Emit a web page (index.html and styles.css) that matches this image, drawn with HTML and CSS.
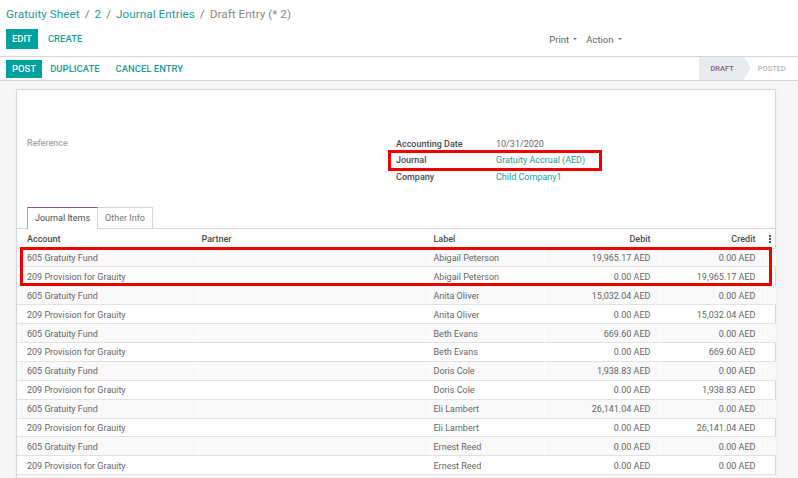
FILE: index.html
```html
<!DOCTYPE html>
<html>
<head>
<meta charset="utf-8">
<link rel="stylesheet" href="styles.css">
</head>
<body>
<div class="cp">
  <div class="crumbs">
    <a class="lnk">Gratuity Sheet</a><span class="sep">/</span><a class="lnk">2</a><span class="sep">/</span><a class="lnk">Journal Entries</a><span class="sep">/</span><span class="cur">Draft Entry (* 2)</span>
  </div>
  <div class="cp-row">
    <div class="btns">
      <span class="btn primary">EDIT</span>
      <span class="btn">CREATE</span>
    </div>
    <div class="dds">
      <span class="dd">Print <i class="caret"></i></span>
      <span class="dd">Action <i class="caret"></i></span>
    </div>
  </div>
</div>
<div class="sbar">
  <div class="btns">
    <span class="btn primary sm">POST</span>
    <span class="btn sm">DUPLICATE</span>
    <span class="btn sm">CANCEL ENTRY</span>
  </div>
  <div class="states">
    <span class="st active">DRAFT</span>
    <span class="st">POSTED</span>
  </div>
</div>
<div class="content">
  <div class="sheet">
    <div class="fields">
      <div class="col-left">
        <div class="lbl muted">Reference</div>
      </div>
      <div class="col-right">
        <div class="frow"><span class="flbl">Accounting Date</span><span class="fval">10/31/2020</span></div>
        <div class="frow mark"><span class="flbl">Journal</span><span class="fval link">Gratuity Accrual (AED)</span></div>
        <div class="frow"><span class="flbl">Company</span><span class="fval link">Child Company1</span></div>
      </div>
    </div>
    <div class="tabs">
      <span class="tab active">Journal Items</span>
      <span class="tab">Other Info</span>
    </div>
    <div class="tblwrap">
      <table class="lines">
        <thead>
          <tr><th class="c-acc">Account</th><th class="c-par">Partner</th><th class="c-lab">Label</th><th class="c-deb num">Debit</th><th class="c-cre num">Credit</th><th class="c-opt"><span class="kebab"><i></i><i></i><i></i></span></th></tr>
        </thead>
        <tbody>
          <tr><td>605 Gratuity Fund</td><td></td><td>Abigail Peterson</td><td class="num">19,965.17 AED</td><td class="num">0.00 AED</td><td></td></tr>
          <tr><td>209 Provision for Grauity</td><td></td><td>Abigail Peterson</td><td class="num">0.00 AED</td><td class="num">19,965.17 AED</td><td></td></tr>
          <tr><td>605 Gratuity Fund</td><td></td><td>Anita Oliver</td><td class="num">15,032.04 AED</td><td class="num">0.00 AED</td><td></td></tr>
          <tr><td>209 Provision for Grauity</td><td></td><td>Anita Oliver</td><td class="num">0.00 AED</td><td class="num">15,032.04 AED</td><td></td></tr>
          <tr><td>605 Gratuity Fund</td><td></td><td>Beth Evans</td><td class="num">669.60 AED</td><td class="num">0.00 AED</td><td></td></tr>
          <tr><td>209 Provision for Grauity</td><td></td><td>Beth Evans</td><td class="num">0.00 AED</td><td class="num">669.60 AED</td><td></td></tr>
          <tr><td>605 Gratuity Fund</td><td></td><td>Doris Cole</td><td class="num">1,938.83 AED</td><td class="num">0.00 AED</td><td></td></tr>
          <tr><td>209 Provision for Grauity</td><td></td><td>Doris Cole</td><td class="num">0.00 AED</td><td class="num">1,938.83 AED</td><td></td></tr>
          <tr><td>605 Gratuity Fund</td><td></td><td>Eli Lambert</td><td class="num">26,141.04 AED</td><td class="num">0.00 AED</td><td></td></tr>
          <tr><td>209 Provision for Grauity</td><td></td><td>Eli Lambert</td><td class="num">0.00 AED</td><td class="num">26,141.04 AED</td><td></td></tr>
          <tr><td>605 Gratuity Fund</td><td></td><td>Ernest Reed</td><td class="num">0.00 AED</td><td class="num">0.00 AED</td><td></td></tr>
          <tr><td>209 Provision for Grauity</td><td></td><td>Ernest Reed</td><td class="num">0.00 AED</td><td class="num">0.00 AED</td><td></td></tr>
          <tr><td></td><td></td><td></td><td></td><td></td><td></td></tr>
        </tbody>
      </table>
      <div class="hl"></div>
    </div>
  </div>
</div>
</body>
</html>
```
FILE: styles.css
```css
* { box-sizing: border-box; }
html, body { margin: 0; padding: 0; height: 100%; overflow: hidden; }
body {
  font-family: Roboto, "Noto Sans", sans-serif;
  color: #4c4c4c;
  background: #fff;
  font-size: 9px;
}
.cp {
  padding: 0 6px;
  border-bottom: 1px solid #d6d6d6;
  height: 57px;
}
.crumbs {
  font-size: 11.8px;
  height: 29px;
  padding-top: 7px;
  white-space: nowrap;
}
.lnk { color: #1a9c9c; }
.sep { color: #777; margin: 0 5px; }
.cur { color: #888; }
.cp-row {
  display: flex;
  align-items: center;
  height: 20px;
}
.btns { display: flex; align-items: center; gap: 0; }
.btn {
  font-size: 9.5px;
  font-weight: 500;
  color: #1a9c9c;
  padding: 0 10px 0 10px;
  line-height: 20px;
  height: 20px;
}
.btn.primary {
  background: #00a09d;
  color: #fff;
  padding: 0 6px;
}
.btn.sm { line-height: 18px; height: 18px; padding: 0 8px; }
.btn.primary.sm { padding: 0 6px; }
.dds {
  margin-left: 457px;
  display: flex;
  gap: 9px;
  color: #666;
  font-size: 9.5px;
}
.dd { display: inline-flex; align-items: center; gap: 4px; }
.caret {
  display: inline-block;
  width: 0; height: 0;
  border-left: 2.5px solid transparent;
  border-right: 2.5px solid transparent;
  border-top: 2.5px solid #777;
}
.sbar {
  height: 24px;
  border-bottom: 1px solid #d6d6d6;
  display: flex;
  align-items: center;
  justify-content: space-between;
  padding-left: 6px;
}
.states { display: flex; height: 23px; align-self: flex-start; }
.st {
  font-size: 7.5px;
  font-weight: 500;
  color: #b5b5b5;
  line-height: 23px;
  padding: 0 12px 0 14px;
}
.st.active {
  background: #e9ecef;
  color: #875a7b;
  position: relative;
  padding: 0 10px 0 11px;
  margin-left: 3px;
}
.st.active::after {
  content: "";
  position: absolute;
  right: -7px;
  top: 0;
  border-top: 11.5px solid transparent;
  border-bottom: 11.5px solid transparent;
  border-left: 7px solid #e9ecef;
}
.content {
  background: #f7f7f7;
  height: 400px;
  padding: 8px 22px 0 16px;
}
.sheet {
  background: #fff;
  border: 1px solid #d3d8de;
  border-bottom: 0;
  box-shadow: 0 2px 6px rgba(0,0,0,0.06);
  height: 100%;
  padding: 47px 0 0 0;
}
.fields {
  display: flex;
  padding: 0 10px;
  height: 70px;
}
.col-left { width: 369px; }
.lbl.muted { color: #a8a8a8; font-weight: 500; padding-top: 1px; }
.col-right { display: flex; flex-direction: column; align-items: flex-start; margin-top: -1.5px; }
.frow { display: flex; height: 16px; align-items: center; }
.flbl { width: 100px; font-weight: 500; color: #4c4c4c; }
.fval { color: #666; }
.fval.link { color: #1a9c9c; }
.frow.mark { outline: 3px solid #ee0000; outline-offset: 0; margin: 1px -5px 1px -5px; padding: 0 14px 0 5px; height: 15px; }
.tabs {
  display: flex;
  padding-left: 10px;
  border-bottom: 1px solid #d6d6d6;
  height: 22px;
}
.tab {
  padding: 0 7px;
  line-height: 21px;
  color: #777;
  border: 1px solid transparent;
}
.tab.active {
  color: #4c4c4c;
  border-color: #d6d6d6;
  border-top-color: #875a7b;
  border-left-color: #b9a5b3;
  border-bottom-color: #fff;
  background: #fff;
  margin-bottom: -1px;
  height: 23px;
}
.tab:not(.active) { border-color: #d6d6d6; border-left: 0; border-bottom: 0; }
.tblwrap { position: relative; }
table.lines {
  width: 100%;
  border-collapse: collapse;
  table-layout: fixed;
}
.lines th, .lines td {
  height: 18.9px;
  padding: 0 0 0 3px;
  text-align: left;
  white-space: nowrap;
  overflow: hidden;
  border-left: 1px solid #fff;
}
.lines th { font-weight: 500; color: #4c4c4c; height: 19px; padding-top: 1px; }
.lines td { border-bottom: 1px solid #e2e2e2; color: #666; padding-top: 1px; }
.lines thead tr { border-bottom: 1px solid #e2e2e2; }
.lines tbody tr:nth-child(odd) td { background: #f9f9f9; }
.lines .num { text-align: right; padding-right: 9px; }
.lines td:nth-child(1), .lines th:nth-child(1) { padding-left: 10px; }
.c-acc { width: 181px; }
.c-par { width: 232px; }
.c-lab { width: 114px; }
.c-deb { width: 116px; }
.c-cre { width: 105px; }
.c-opt { width: 11px; }
.lines td:nth-child(1), .lines th:nth-child(1) { border-left: 0; }
.kebab { display: inline-flex; flex-direction: column; gap: 1px; vertical-align: middle; }
.kebab i { width: 2px; height: 2px; background: #4c4c4c; display: block; }
.lines th.c-opt { padding-left: 3px; }
.hl {
  position: absolute;
  left: 3px;
  right: 3px;
  top: 18px;
  height: 39px;
  border: 3px solid #ee0000;
  pointer-events: none;
}
```
